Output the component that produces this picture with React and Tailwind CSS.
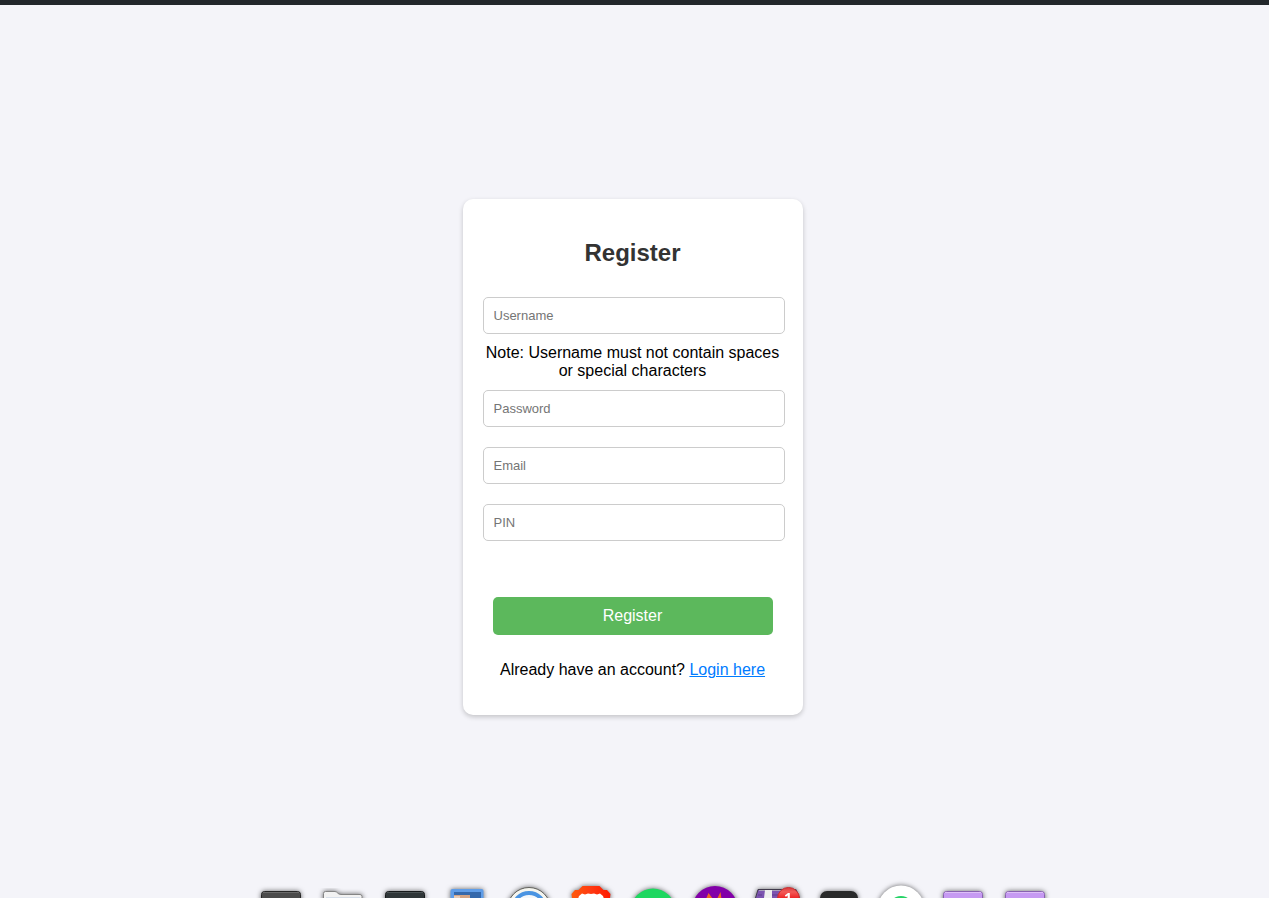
import React from "react";

const inputClass =
  "-mr-0.5 h-[37px] rounded-[5px] border border-[#cccccc] bg-white px-[10px] text-[13px] text-black placeholder:text-[#757575] placeholder:opacity-100";

function DockIcon({ name, children }) {
  return (
    <svg
      role="img"
      aria-label={name}
      viewBox="0 0 62 20"
      className="h-5 w-[62px] shrink-0"
    >
      <g filter="url(#dock-shadow)">{children}</g>
    </svg>
  );
}

function Tile({ top, bottom, edge, shine }) {
  return (
    <>
      <rect x="11.5" y="13.5" width="39" height="30" rx="3" fill={bottom} stroke={edge} />
      <path d="M13 14.5H49" stroke={shine} />
      <path d="M12 15H50V20H12Z" fill={top} />
    </>
  );
}

function Dock() {
  return (
    <footer className="flex justify-center overflow-hidden pl-[37px]">
      <svg className="absolute size-0" aria-hidden="true">
        <defs>
          <filter id="dock-shadow" x="-30%" y="-30%" width="160%" height="160%" colorInterpolationFilters="sRGB">
            <feDropShadow dx="0" dy="0" stdDeviation="2.5" floodColor="#000000" floodOpacity="0.6" />
          </filter>
          <linearGradient id="lion" x1="0" x2="1">
            <stop offset="0" stopColor="#ff5a0a" />
            <stop offset="0.5" stopColor="#ff3a12" />
            <stop offset="1" stopColor="#ff1a00" />
          </linearGradient>
          <linearGradient id="badge" x1="0" y1="0" x2="0" y2="1">
            <stop offset="0" stopColor="#d83a3c" />
            <stop offset="0.2" stopColor="#f25a58" />
            <stop offset="0.5" stopColor="#ee2224" />
          </linearGradient>
        </defs>
      </svg>
      <DockIcon name="Terminal">
        <Tile top="#4b4b4b" bottom="#4b4b4b" edge="#262626" shine="#6b6b6b" />
      </DockIcon>
      <DockIcon name="Files">
        <path
          d="M11.5 24V15.500Q11.5 13.5 13.500 13.5H23C25.500 13.5 25.500 16.500 29 16.500H48Q50 16.500 50 18.500V24Z"
          fill="#f2f2f2"
          stroke="#858585"
        />
        <path d="M14 19H48V24H14Z" fill="#d9e0ea" />
      </DockIcon>
      <DockIcon name="Console">
        <Tile top="#2f3638" bottom="#2f3638" edge="#16191a" shine="#4b5355" />
      </DockIcon>
      <DockIcon name="Gallery">
        <rect x="14.500" y="11" width="33" height="30" rx="2" fill="#5f9de8" />
        <path d="M18 14H45V24H18Z" fill="#3468ab" />
        <path d="M18 17H34V24H18Z" fill="#d3a484" />
        <path d="M18 18H24V24H18Z" fill="#e5cbb8" />
      </DockIcon>
      <DockIcon name="Browser">
        <circle cx="31" cy="31" r="21.500" fill="#f5f5ef" stroke="#62625d" />
        <circle cx="31" cy="31" r="16" fill="#f4f7fa" stroke="#4a94e2" strokeWidth="4" />
      </DockIcon>
      <DockIcon name="Brave">
        <path
          d="M22.500 8H39.500L43.500 12H47L50.500 16L49.500 24H12.500L11.500 16L15 12H18.500Z"
          fill="url(#lion)"
        />
        <path
          d="M17 24L19 18L22 15.500L25 16.500L28 15.500L31 16L34 15.500L37 16.500L40 15.500L43 18L45 24Z"
          fill="#ffffff"
        />
      </DockIcon>
      <DockIcon name="Music">
        <circle cx="31" cy="33" r="22.500" fill="#1ed760" />
      </DockIcon>
      <DockIcon name="Fire">
        <circle cx="31" cy="31" r="23" fill="#8200a8" />
        <path d="M22 21L24.500 15L29 21ZM33 21L36.500 14L37.500 21Z" fill="#f06a22" />
      </DockIcon>
      <DockIcon name="Package">
        <path d="M9.500 24V20L12 11.500H50L53.500 20V24Z" fill="#7c54b0" stroke="#403a4c" strokeLinejoin="round" />
        <path d="M13 12.500H50" stroke="#aaa0bd" />
        <path d="M12 17H16M26 17H34" stroke="#5d3a8f" />
        <path d="M19 12H26V20H18Z" fill="#eeeeee" />
        <circle cx="42.500" cy="20.500" r="11" fill="url(#badge)" stroke="#c92f32" />
        <text
          x="42"
          y="25"
          textAnchor="middle"
          fill="#ffffff"
          className="font-['Open_Sans',sans-serif] text-[14px] font-bold"
        >
          1
        </text>
      </DockIcon>
      <DockIcon name="Editor">
        <rect x="12" y="13" width="38" height="34" rx="7" fill="#292a2a" />
      </DockIcon>
      <DockIcon name="Chat">
        <circle cx="31" cy="31" r="23.500" fill="#ffffff" />
        <circle cx="31" cy="31" r="13" fill="#25d366" />
      </DockIcon>
      <DockIcon name="Documents">
        <Tile top="#c69af2" bottom="#c69af2" edge="#8862b0" shine="#ddbff8" />
      </DockIcon>
      <DockIcon name="Downloads">
        <Tile top="#c69af2" bottom="#c69af2" edge="#8862b0" shine="#ddbff8" />
      </DockIcon>
    </footer>
  );
}

export default function App() {
  return (
    <div className="flex min-h-screen flex-col bg-[#f4f4f9] font-['Liberation_Sans',Arial,sans-serif] text-base leading-[18px] text-black">
      <header className="h-[5px] bg-[#22272b]" />
      <main className="flex grow items-center justify-center pt-[31px] pr-1">
        <section className="w-full max-w-[340px] rounded-[10px] bg-white px-5 py-9 text-center shadow-[0_2px_5px_rgba(0,0,0,0.2)]">
          <h1 className="mt-1 text-2xl leading-[27px] font-bold text-[#333333]">Register</h1>
          <form className="mt-[31px] flex flex-col" onSubmit={(e) => e.preventDefault()}>
            <input className={inputClass} type="text" name="username" placeholder="Username" aria-label="Username" aria-describedby="username-note" />
            <p id="username-note" className="my-[10px]">
              Note: Username must not contain spaces or special characters
            </p>
            <div className="flex flex-col gap-5">
              <input className={inputClass} type="password" name="password" placeholder="Password" aria-label="Password" />
              <input className={inputClass} type="email" name="email" placeholder="Email" aria-label="Email" />
              <input className={inputClass} type="password" name="pin" placeholder="PIN" aria-label="PIN" />
            </div>
            <button type="submit" className="mx-[10px] mt-14 h-[38px] rounded-[5px] bg-[#5cb85c] text-white">
              Register
            </button>
          </form>
          <p className="mt-[26px]">
            Already have an account?{" "}
            <a href="#login" className="text-[#007bff] underline">
              Login here
            </a>
          </p>
        </section>
      </main>
      <Dock />
    </div>
  );
}
